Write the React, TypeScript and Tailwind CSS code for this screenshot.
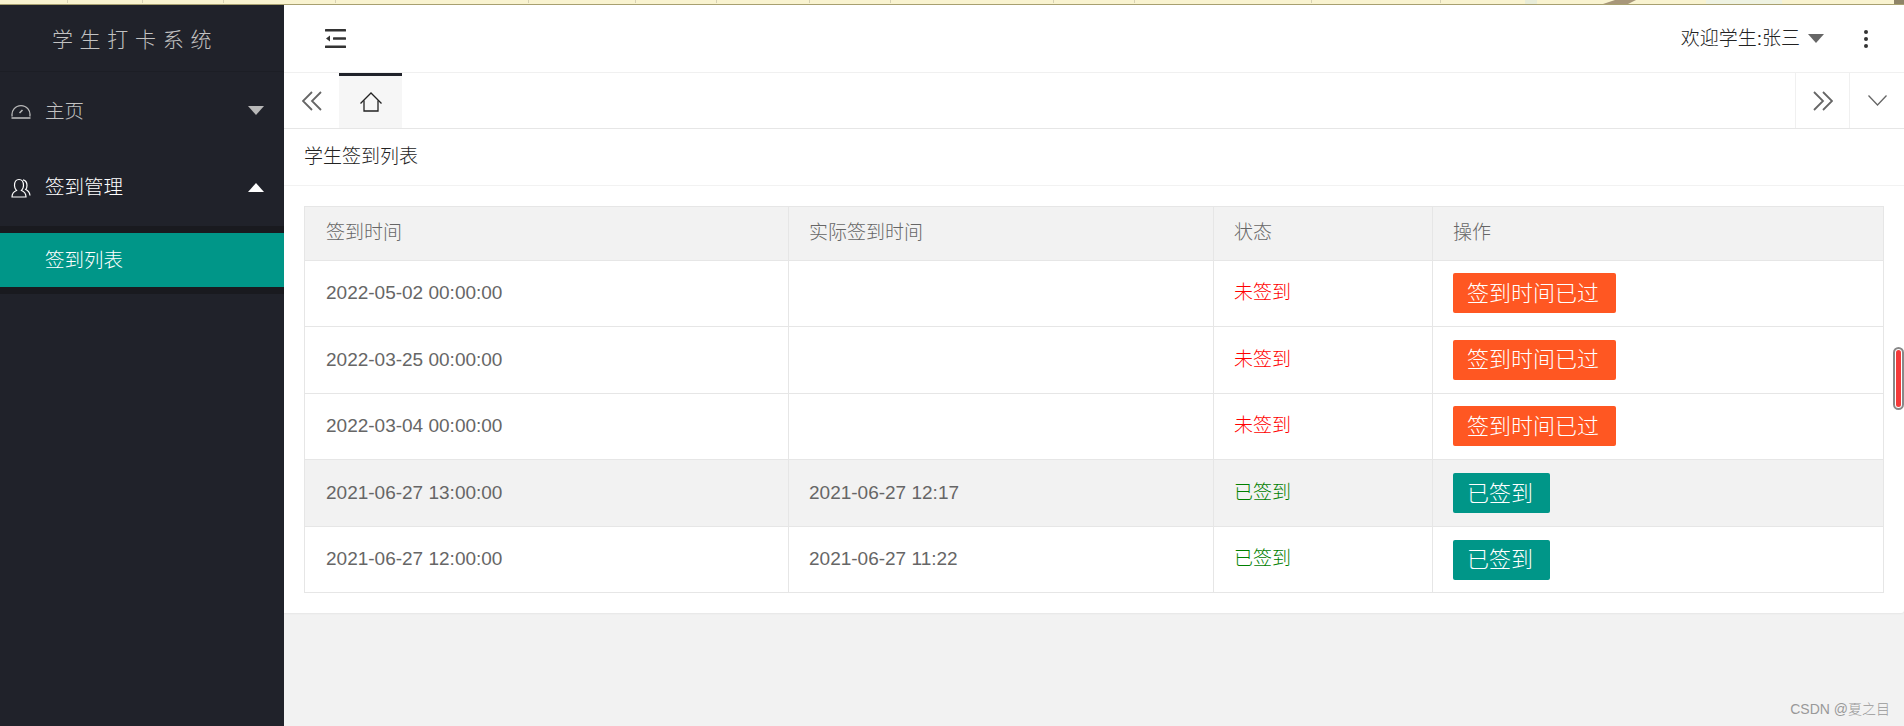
const FONT = "font-['Liberation_Sans','Noto_Sans_CJK_SC',sans-serif]";

const rows = [
  { time: "2022-05-02 00:00:00", actual: "", done: false },
  { time: "2022-03-25 00:00:00", actual: "", done: false },
  { time: "2022-03-04 00:00:00", actual: "", done: false },
  { time: "2021-06-27 13:00:00", actual: "2021-06-27 12:17", done: true },
  { time: "2021-06-27 12:00:00", actual: "2021-06-27 11:22", done: true },
];

const stripTicks = [67, 142, 223, 335, 528, 635, 716, 809, 890, 1053, 1134, 1311, 1440];

function Caret({ up, color }: { up?: boolean; color: string }) {
  return (
    <svg width="16" height="9" viewBox="0 0 16 9" className="block">
      <path d={up ? "M8 0L16 9H0Z" : "M0 0H16L8 9Z"} fill={color} />
    </svg>
  );
}

function GaugeIcon() {
  return (
    <svg width="20" height="16" viewBox="0 0 20 16" fill="none" stroke="#b8b8b8" strokeWidth="1.3" className="block">
      <path d="M1.200 13.500A9 9 0 1 1 18.800 13.500" />
      <path d="M0.500 15H19.500" strokeWidth="1.600" />
      <path d="M8.500 10L11.500 7" strokeWidth="1.600" />
    </svg>
  );
}

function UsersIcon() {
  return (
    <svg width="20" height="20" viewBox="0 0 20 20" fill="none" stroke="#ffffff" strokeWidth="1.200" className="block">
      <path d="M1 19c0-4 2-5.500 4.500-6.500C4 11 3.500 9.500 3.500 7.500 3.500 4 5 1.500 8 1.500S12.500 4 12.500 7.500c0 2-.5 3.500-2 5 2.500 1 4.500 2.500 4.500 6.500Z" />
      <path d="M12 1.800c2.500.5 4 2.700 4 5.700 0 1.500-.4 3-1.300 4 2.300 1 4 2.800 4.300 6" />
    </svg>
  );
}

function FoldIcon() {
  return (
    <svg width="21" height="19" viewBox="0 0 21 19" className="block" fill="#333333">
      <rect x="0" y="0" width="21" height="2.500" rx="0.500" />
      <rect x="8" y="8.200" width="13" height="2.500" rx="0.500" />
      <rect x="0" y="16.500" width="21" height="2.500" rx="0.500" />
      <path d="M1 9.500L5 6.500V12.500Z" />
    </svg>
  );
}

function DoubleChevron({ right }: { right?: boolean }) {
  return (
    <svg width="20" height="20" viewBox="0 0 20 20" fill="none" stroke="#666666" strokeWidth="1.800" className="block">
      <path d={right ? "M1 1L10 10L1 19M10 1L19 10L10 19" : "M10 1L1 10L10 19M19 1L10 10L19 19"} />
    </svg>
  );
}

function HomeIcon() {
  return (
    <svg width="22" height="20" viewBox="0 0 22 20" fill="none" stroke="#222222" strokeWidth="1.300" className="block">
      <path d="M0.500 11.500L11 1L21.500 11.500" />
      <path d="M4 8.500V19H18V8.500" />
    </svg>
  );
}

function DownIcon() {
  return (
    <svg width="19" height="11" viewBox="0 0 19 11" fill="none" stroke="#666666" strokeWidth="1.300" className="block">
      <path d="M0.500 0.500L9.500 10L18.500 0.500" />
    </svg>
  );
}

export default function App() {
  return (
    <div className={`${FONT} relative flex h-[726px] w-full flex-col overflow-hidden bg-[#f2f2f2] font-light`}>
      {/* strip of the window above the page */}
      <svg width="1904" height="5" viewBox="0 0 1904 5" className="block shrink-0">
        <rect width="1904" height="4" fill="#f9f3d0" />
        <rect y="4" width="1904" height="1" fill="#a8a070" />
        {stripTicks.map((x) => (
          <rect key={x} x={x} width="1" height="3" fill="#d8d2b4" />
        ))}
        <rect x="1525" width="12" height="4" fill="#e8ecd8" />
        <rect x="1706" width="76" height="4" fill="#eef2e2" />
        <path d="M1603 4L1615 0H1636L1628 4Z" fill="#a8977a" />
        <rect x="1894" width="10" height="4" fill="#8f8468" />
      </svg>

      <div className="flex min-h-0 flex-1">
        {/* ── Sidebar ── */}
        <aside className="flex w-[284px] shrink-0 flex-col bg-[#20222a]">
          <div className="flex h-[67px] items-center justify-center border-b border-[#1c1e25] pt-[3px] pr-[14px] text-[21px] tracking-[6.700px] text-[#c2c2c2]">
            学生打卡系统
          </div>
          <div className="flex h-[77px] items-center pl-[11px] pr-[20px] text-[19.500px] text-[#c2c2c2]">
            <GaugeIcon />
            <span className="ml-[14px] flex-1 pt-[2px]">主页</span>
            <Caret color="#b8b8b8" />
          </div>
          <div className="flex h-[77px] items-center pl-[11px] pr-[20px] text-[19.500px] text-white">
            <UsersIcon />
            <span className="ml-[14px] flex-1 pt-[1px]">签到管理</span>
            <Caret up color="#ffffff" />
          </div>
          <div className="bg-[#191a1f] py-[7px]">
            <div className="flex h-[54px] items-center bg-[#009688] pl-[45px] pt-[1px] text-[19.500px] text-white">签到列表</div>
          </div>
        </aside>

        {/* ── Main ── */}
        <main className="flex min-w-0 flex-1 flex-col">
          <header className="flex h-[67px] items-center bg-white pl-[41px] pr-[36px] text-[19px] text-[#222222]">
            <FoldIcon />
            <div className="ml-auto flex items-center">
              <span className="pt-[1px]">欢迎学生:张三</span>
              <span className="ml-[8px]">
                <Caret color="#666666" />
              </span>
            </div>
            <div className="ml-[40px] flex flex-col gap-[3px]">
              <span className="h-[4px] w-[4px] rounded-full bg-[#333333]" />
              <span className="h-[4px] w-[4px] rounded-full bg-[#333333]" />
              <span className="h-[4px] w-[4px] rounded-full bg-[#333333]" />
            </div>
          </header>

          <nav className="flex h-[57px] items-stretch border-y border-[#f0f0f0] border-b-[#e6e6e6] bg-white">
            <div className="flex w-[55px] items-center justify-center">
              <DoubleChevron />
            </div>
            <div className="flex w-[63px] items-center justify-center border-t-[3px] border-[#20222a] bg-[#f6f6f6]">
              <HomeIcon />
            </div>
            <div className="ml-auto flex w-[54px] items-center justify-center border-l border-[#f0f0f0]">
              <DoubleChevron right />
            </div>
            <div className="flex w-[55px] items-center justify-center border-l border-[#f0f0f0]">
              <DownIcon />
            </div>
          </nav>

          <section className="rounded-br-[3px] bg-white pb-[20px] shadow-[0_1px_2px_rgba(0,0,0,0.05)]">
            <div className="flex h-[57px] items-center border-b border-[#f2f2f2] pl-[20px] text-[19px] text-[#222222]">
              学生签到列表
            </div>
            <div className="pt-[20px] pl-[20px] pr-[20px]">
              <table className="w-full table-fixed border-collapse text-[19px] text-[#666666]">
                <colgroup>
                  <col className="w-[484px]" />
                  <col className="w-[425px]" />
                  <col className="w-[219px]" />
                  <col />
                </colgroup>
                <thead>
                  <tr className="h-[53.500px] bg-[#f2f2f2] text-left">
                    {["签到时间", "实际签到时间", "状态", "操作"].map((h, i) => (
                      <th key={h} className={`border border-[#e6e6e6] font-light ${i === 0 ? "pl-[21px]" : "pl-[20px]"}`}>
                        {h}
                      </th>
                    ))}
                  </tr>
                </thead>
                <tbody>
                  {rows.map((row, i) => (
                    <tr key={row.time} className={`h-[66.600px] ${i === 3 ? "bg-[#f2f2f2]" : ""}`}>
                      <td className="border border-[#e6e6e6] pl-[21px]">{row.time}</td>
                      <td className="border border-[#e6e6e6] pl-[20px]">{row.actual}</td>
                      <td className={`border border-[#e6e6e6] pl-[20px] ${row.done ? "text-[#008000]" : "text-[#ff0000]"}`}>
                        {row.done ? "已签到" : "未签到"}
                      </td>
                      <td className="border border-[#e6e6e6] pl-[20px]">
                        <span
                          className={`inline-flex h-[40px] items-center rounded-[2px] pl-[14px] pr-[17px] text-[22px] text-white ${
                            row.done ? "bg-[#009688]" : "bg-[#ff5722]"
                          }`}
                        >
                          {row.done ? "已签到" : "签到时间已过"}
                        </span>
                      </td>
                    </tr>
                  ))}
                </tbody>
              </table>
            </div>
          </section>
        </main>
      </div>

      {/* scrollbar thumb of the outer window */}
      <div className="absolute right-0 top-[347px] h-[63px] w-[11px] rounded-full border-2 border-[#888888] bg-white p-[1px]">
        <div className="h-full w-full rounded-full bg-[#f53a3a]" />
      </div>
      <div className="absolute bottom-[6px] right-[14px] text-[14px] text-[#999999]">CSDN @夏之目</div>
    </div>
  );
}
